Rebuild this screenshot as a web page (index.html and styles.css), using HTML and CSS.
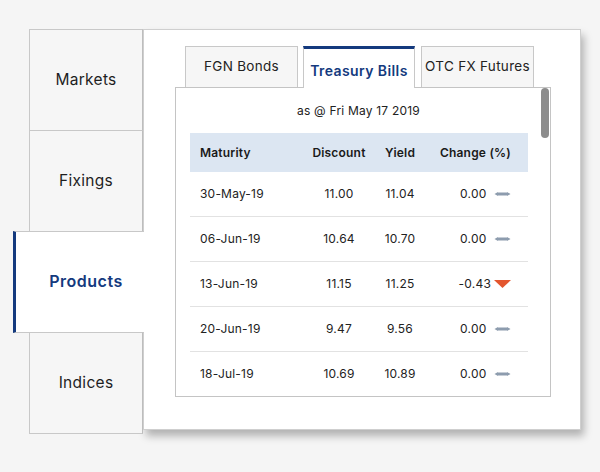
FILE: index.html
```html
<!DOCTYPE html>
<html>
<head>
<meta charset="utf-8">
<link rel="stylesheet" href="styles.css">
</head>
<body>
<div class="wrap">
  <div class="side">
    <div class="stab">Markets</div>
    <div class="stab">Fixings</div>
    <div class="stab active">Products</div>
    <div class="stab">Indices</div>
  </div>
  <div class="panel">
    <div class="ttabs">
      <div class="ttab">FGN Bonds</div>
      <div class="ttab active">Treasury Bills</div>
      <div class="ttab">OTC FX Futures</div>
    </div>
    <div class="box">
      <div class="scrollthumb"></div>
      <div class="content">
        <div class="asof">as @ Fri May 17 2019</div>
        <div class="table">
          <div class="row head">
            <div class="c1">Maturity</div><div class="c2">Discount</div><div class="c3">Yield</div><div class="c4">Change (%)</div>
          </div>
          <div class="row">
            <div class="c1">30-May-19</div><div class="c2">11.00</div><div class="c3">11.04</div>
            <div class="c4">0.00 <svg class="ico" viewBox="0 0 17 8" width="17" height="8"><path d="M0.5 4 L4 2 L4 2.6 L13 2.6 L13 2 L16.5 4 L13 6 L13 5.4 L4 5.4 L4 6 Z" fill="#8d9cae"/></svg></div>
          </div>
          <div class="row">
            <div class="c1">06-Jun-19</div><div class="c2">10.64</div><div class="c3">10.70</div>
            <div class="c4">0.00 <svg class="ico" viewBox="0 0 17 8" width="17" height="8"><path d="M0.5 4 L4 2 L4 2.6 L13 2.6 L13 2 L16.5 4 L13 6 L13 5.4 L4 5.4 L4 6 Z" fill="#8d9cae"/></svg></div>
          </div>
          <div class="row">
            <div class="c1">13-Jun-19</div><div class="c2">11.15</div><div class="c3">11.25</div>
            <div class="c4">-0.43<svg class="ico down" viewBox="0 0 17 8" width="17" height="8"><path d="M0 0 L17 0 L8.5 8 Z" fill="#e3562f"/></svg></div>
          </div>
          <div class="row">
            <div class="c1">20-Jun-19</div><div class="c2">9.47</div><div class="c3">9.56</div>
            <div class="c4">0.00 <svg class="ico" viewBox="0 0 17 8" width="17" height="8"><path d="M0.5 4 L4 2 L4 2.6 L13 2.6 L13 2 L16.5 4 L13 6 L13 5.4 L4 5.4 L4 6 Z" fill="#8d9cae"/></svg></div>
          </div>
          <div class="row">
            <div class="c1">18-Jul-19</div><div class="c2">10.69</div><div class="c3">10.89</div>
            <div class="c4">0.00 <svg class="ico" viewBox="0 0 17 8" width="17" height="8"><path d="M0.5 4 L4 2 L4 2.6 L13 2.6 L13 2 L16.5 4 L13 6 L13 5.4 L4 5.4 L4 6 Z" fill="#8d9cae"/></svg></div>
          </div>
        </div>
      </div>
    </div>
  </div>
</div>
</body>
</html>
```
FILE: styles.css
```css
* { box-sizing: border-box; }
html, body { margin: 0; padding: 0; }
body {
  width: 600px;
  height: 472px;
  overflow: hidden;
  background: #f5f5f5;
  font-family: "Inter", "Open Sans", sans-serif;
  color: #222;
}
.wrap {
  display: flex;
  padding: 29px 0 0 13px;
}
.side {
  width: 130px;
  display: flex;
  flex-direction: column;
  align-items: flex-end;
  position: relative;
  z-index: 2;
}
.stab {
  width: 114px;
  height: 102px;
  margin-bottom: -1px;
  border: 1px solid #c8c8c8;
  border-right-color: #bdbdbd;
  background: #f6f6f6;
  display: flex;
  align-items: center;
  justify-content: center;
  font-size: 15.5px;
  letter-spacing: 0.3px;
  color: #1e1e1e;
  padding-bottom: 2px;
}
.stab.active {
  width: 131px;
  margin-right: -1px;
  border-left: 3px solid #143a7e;
  border-right: none;
  background: #fff;
  color: #143a7e;
  font-weight: 600;
  font-size: 16px;
  letter-spacing: 0.5px;
  padding-left: 12px;
}
.panel {
  width: 438px;
  height: 401px;
  background: #fff;
  border: 1px solid #cfcfcf;
  box-shadow: 3px 6px 8px rgba(0, 0, 0, 0.28);
  padding: 16px 0 0 31px;
  position: relative;
  z-index: 1;
}
.ttabs {
  display: flex;
  gap: 6px;
  padding-left: 10px;
  position: relative;
  z-index: 2;
}
.ttab {
  width: 113px;
  height: 41px;
  border: 1px solid #c8c8c8;
  border-bottom: none;
  background: #f6f6f6;
  display: flex;
  align-items: center;
  justify-content: center;
  font-size: 13.5px;
  letter-spacing: 0.3px;
  color: #222;
  padding-bottom: 3px;
  white-space: nowrap;
}
.ttab.active {
  width: 112px;
  height: 42px;
  margin-bottom: -1px;
  margin-left: -1px;
  border-top: 3px solid #143a7e;
  background: #fff;
  color: #143a7e;
  font-weight: 600;
  font-size: 14px;
  letter-spacing: 0.4px;
  padding-top: 4px;
  padding-bottom: 0;
}
.box {
  width: 376px;
  height: 310px;
  border: 1px solid #c4c4c4;
  position: relative;
  overflow: hidden;
}
.scrollthumb {
  position: absolute;
  top: 0;
  right: 1px;
  width: 8px;
  height: 50px;
  border-radius: 4px;
  background: #8c8c8c;
}
.content {
  width: 365px;
}
.asof {
  height: 45px;
  line-height: 45px;
  text-align: center;
  font-size: 12px;
  letter-spacing: 0.2px;
  color: #222;
}
.table {
  margin-left: 14px;
  width: 338px;
}
.row {
  display: grid;
  grid-template-columns: 110px 78px 44px 1fr;
  height: 45px;
  align-items: center;
  border-bottom: 1px solid #e2e2e2;
  font-size: 12px;
  letter-spacing: 0.2px;
  color: #222;
  padding-bottom: 1px;
}
.row.head {
  height: 39px;
  background: #dce6f2;
  border-bottom: none;
  font-weight: 600;
  color: #1a1a1a;
}
.c1 { padding-left: 10px; }
.c2, .c3 { text-align: center; }
.c4 {
  display: flex;
  justify-content: flex-end;
  align-items: center;
  padding-right: 17px;
  white-space: pre;
}
.ico { margin-left: 4px; display: block; }
.ico.down { margin-left: 3px; }
```
